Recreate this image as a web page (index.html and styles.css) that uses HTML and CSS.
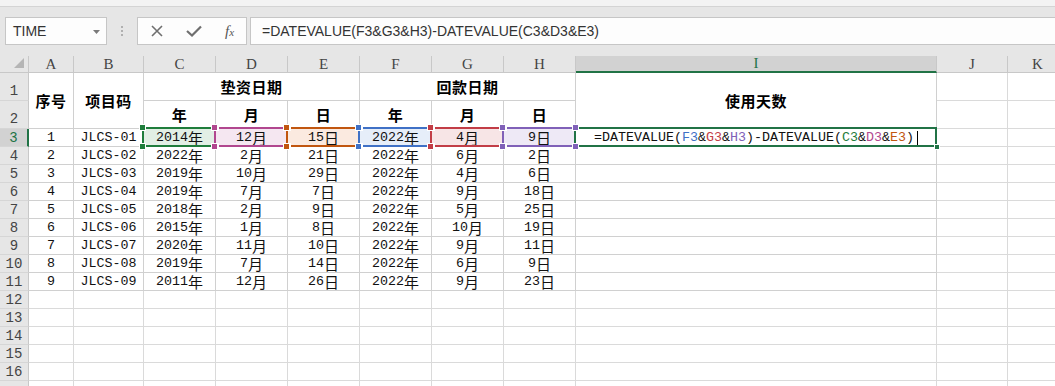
FILE: index.html
```html
<!DOCTYPE html>
<html lang="zh">
<head>
<meta charset="utf-8">
<title>DATEVALUE</title>
<link rel="stylesheet" href="styles.css">
</head>
<body>
<div class="ribbon"></div>
<div class="fbar">
  <div class="namebox"><span>TIME</span><svg class="dd" width="7" height="4" viewBox="0 0 7 4"><path d="M0 0H7L3.5 4Z" fill="#7a7a7a"/></svg></div>
  <div class="grip"><i></i><i></i><i></i></div>
  <div class="fxbox">
    <svg width="14" height="12" viewBox="0 0 14 12"><path d="M2 1L12 11M12 1L2 11" stroke="#6f6f6f" stroke-width="1.6" fill="none"/></svg>
    <svg width="16" height="12" viewBox="0 0 16 12"><path d="M1 6L6 10.5L15 1.5" stroke="#6f6f6f" stroke-width="2.2" fill="none"/></svg>
    <span class="fx">f<small>x</small></span>
  </div>
  <div class="finput">=DATEVALUE(F3&amp;G3&amp;H3)-DATEVALUE(C3&amp;D3&amp;E3)</div>
</div>

<div class="sheet">
  <div class="ch corner"><svg width="12" height="12" viewBox="0 0 12 12"><path d="M11 1V11H1Z" fill="#b5b5b5"/></svg></div>
  <div class="ch">A</div><div class="ch">B</div><div class="ch">C</div><div class="ch">D</div><div class="ch">E</div><div class="ch">F</div><div class="ch">G</div><div class="ch">H</div><div class="ch sel">I</div><div class="ch">J</div><div class="ch">K</div>

  <div class="rh tall">1</div>
  <div class="c hd span2r">序号</div>
  <div class="c hd span2r">项目码</div>
  <div class="c hd span3c">垫资日期</div>
  <div class="c hd span3c">回款日期</div>
  <div class="c hd span2r">使用天数</div>
  <div class="e"></div><div class="e"></div>

  <div class="rh tall">2</div>
  <div class="c hd">年</div><div class="c hd">月</div><div class="c hd">日</div>
  <div class="c hd">年</div><div class="c hd">月</div><div class="c hd">日</div>
  <div class="e"></div><div class="e"></div>

  <div class="rh sel">3</div>
  <div class="c">1</div><div class="c">JLCS-01</div>
  <div class="c rng r-c">2014<span class="k">年</span><span class="hs"><i></i><i></i><i></i><i></i></span></div>
  <div class="c rng r-d">12<span class="k">月</span><span class="hs"><i></i><i></i><i></i><i></i></span></div>
  <div class="c rng r-e">15<span class="k">日</span><span class="hs"><i></i><i></i><i></i><i></i></span></div>
  <div class="c rng r-f">2022<span class="k">年</span><span class="hs"><i></i><i></i><i></i><i></i></span></div>
  <div class="c rng r-g">4<span class="k">月</span><span class="hs"><i></i><i></i><i></i><i></i></span></div>
  <div class="c rng r-h">9<span class="k">日</span><span class="hs"><i></i><i></i><i></i><i></i></span></div>
  <div class="c active"><span>=DATEVALUE(<b class="t-f">F3</b>&amp;<b class="t-g">G3</b>&amp;<b class="t-h">H3</b>)-DATEVALUE(<b class="t-c">C3</b>&amp;<b class="t-d">D3</b>&amp;<b class="t-e">E3</b>)</span><span class="caret"></span><span class="fill"></span></div>
  <div class="e"></div><div class="e"></div>

  <div class="rh">4</div><div class="c">2</div><div class="c">JLCS-02</div><div class="c">2022<span class="k">年</span></div><div class="c">2<span class="k">月</span></div><div class="c">21<span class="k">日</span></div><div class="c">2022<span class="k">年</span></div><div class="c">6<span class="k">月</span></div><div class="c">2<span class="k">日</span></div><div class="c"></div><div class="e"></div><div class="e"></div>
  <div class="rh">5</div><div class="c">3</div><div class="c">JLCS-03</div><div class="c">2019<span class="k">年</span></div><div class="c">10<span class="k">月</span></div><div class="c">29<span class="k">日</span></div><div class="c">2022<span class="k">年</span></div><div class="c">4<span class="k">月</span></div><div class="c">6<span class="k">日</span></div><div class="c"></div><div class="e"></div><div class="e"></div>
  <div class="rh">6</div><div class="c">4</div><div class="c">JLCS-04</div><div class="c">2019<span class="k">年</span></div><div class="c">7<span class="k">月</span></div><div class="c">7<span class="k">日</span></div><div class="c">2022<span class="k">年</span></div><div class="c">9<span class="k">月</span></div><div class="c">18<span class="k">日</span></div><div class="c"></div><div class="e"></div><div class="e"></div>
  <div class="rh">7</div><div class="c">5</div><div class="c">JLCS-05</div><div class="c">2018<span class="k">年</span></div><div class="c">2<span class="k">月</span></div><div class="c">9<span class="k">日</span></div><div class="c">2022<span class="k">年</span></div><div class="c">5<span class="k">月</span></div><div class="c">25<span class="k">日</span></div><div class="c"></div><div class="e"></div><div class="e"></div>
  <div class="rh">8</div><div class="c">6</div><div class="c">JLCS-06</div><div class="c">2015<span class="k">年</span></div><div class="c">1<span class="k">月</span></div><div class="c">8<span class="k">日</span></div><div class="c">2022<span class="k">年</span></div><div class="c">10<span class="k">月</span></div><div class="c">19<span class="k">日</span></div><div class="c"></div><div class="e"></div><div class="e"></div>
  <div class="rh">9</div><div class="c">7</div><div class="c">JLCS-07</div><div class="c">2020<span class="k">年</span></div><div class="c">11<span class="k">月</span></div><div class="c">10<span class="k">日</span></div><div class="c">2022<span class="k">年</span></div><div class="c">9<span class="k">月</span></div><div class="c">11<span class="k">日</span></div><div class="c"></div><div class="e"></div><div class="e"></div>
  <div class="rh">10</div><div class="c">8</div><div class="c">JLCS-08</div><div class="c">2019<span class="k">年</span></div><div class="c">7<span class="k">月</span></div><div class="c">14<span class="k">日</span></div><div class="c">2022<span class="k">年</span></div><div class="c">6<span class="k">月</span></div><div class="c">9<span class="k">日</span></div><div class="c"></div><div class="e"></div><div class="e"></div>
  <div class="rh">11</div><div class="c">9</div><div class="c">JLCS-09</div><div class="c">2011<span class="k">年</span></div><div class="c">12<span class="k">月</span></div><div class="c">26<span class="k">日</span></div><div class="c">2022<span class="k">年</span></div><div class="c">9<span class="k">月</span></div><div class="c">23<span class="k">日</span></div><div class="c"></div><div class="e"></div><div class="e"></div>

  <div class="rh">12</div><div class="e"></div><div class="e"></div><div class="e"></div><div class="e"></div><div class="e"></div><div class="e"></div><div class="e"></div><div class="e"></div><div class="e"></div><div class="e"></div><div class="e"></div>
  <div class="rh">13</div><div class="e"></div><div class="e"></div><div class="e"></div><div class="e"></div><div class="e"></div><div class="e"></div><div class="e"></div><div class="e"></div><div class="e"></div><div class="e"></div><div class="e"></div>
  <div class="rh">14</div><div class="e"></div><div class="e"></div><div class="e"></div><div class="e"></div><div class="e"></div><div class="e"></div><div class="e"></div><div class="e"></div><div class="e"></div><div class="e"></div><div class="e"></div>
  <div class="rh">15</div><div class="e"></div><div class="e"></div><div class="e"></div><div class="e"></div><div class="e"></div><div class="e"></div><div class="e"></div><div class="e"></div><div class="e"></div><div class="e"></div><div class="e"></div>
  <div class="rh">16</div><div class="e"></div><div class="e"></div><div class="e"></div><div class="e"></div><div class="e"></div><div class="e"></div><div class="e"></div><div class="e"></div><div class="e"></div><div class="e"></div><div class="e"></div>
  <div class="rh"></div><div class="e"></div><div class="e"></div><div class="e"></div><div class="e"></div><div class="e"></div><div class="e"></div><div class="e"></div><div class="e"></div><div class="e"></div><div class="e"></div><div class="e"></div>
</div>
</body>
</html>
```

FILE: styles.css
```css
* { box-sizing: border-box; }
html, body { margin: 0; padding: 0; }
body {
  width: 1055px;
  height: 386px;
  overflow: hidden;
  background: #e6e6e6;
  font-family: "Liberation Sans", Arial, sans-serif;
}

.ribbon {
  height: 7px;
  background: #f3f3f3;
  border-bottom: 1px solid #d4d4d4;
}

.fbar {
  display: flex;
  align-items: stretch;
  height: 28px;
  margin: 10px 0 11px 0;
  padding-left: 5px;
}
.namebox {
  width: 102px;
  background: #fdfdfd;
  border: 1px solid #c6c6c6;
  display: flex;
  align-items: center;
  justify-content: space-between;
  padding: 0 6px 0 7px;
  font-size: 14px;
  color: #333;
}
.namebox .dd { margin-top: 1px; }
.grip {
  width: 30px;
  display: flex;
  flex-direction: column;
  align-items: center;
  justify-content: center;
  gap: 2px;
}
.grip i {
  display: block;
  width: 2px;
  height: 2px;
  background: #b0b0b0;
}
.fxbox {
  width: 110px;
  background: #fdfdfd;
  border: 1px solid #c6c6c6;
  display: flex;
  align-items: center;
  padding-left: 12px;
  gap: 20px;
}
.fxbox svg:nth-child(2) { margin-left: 2px; }
.fx {
  font-family: "Liberation Serif", serif;
  font-style: italic;
  font-size: 15px;
  color: #555;
  margin-left: 3px;
}
.fx small { font-size: 11px; }
.finput {
  flex: 1;
  margin-left: 3px;
  background: #fdfdfd;
  border-top: 1px solid #c6c6c6;
  border-bottom: 1px solid #c6c6c6;
  border-left: 1px solid #c6c6c6;
  padding-left: 11px;
  display: flex;
  align-items: center;
  font-size: 14px;
  color: #333;
  white-space: nowrap;
}

.sheet {
  display: grid;
  grid-template-columns: 29px 45px 70px 72px 72px 72px 72px 72px 72px 361px 71px 60px;
  grid-template-rows: 17px 28px 28px repeat(15, 18px);
  background: #fff;
  font-family: "Liberation Mono", "Noto Sans CJK SC", monospace;
  font-size: 13.33px;
  color: #111;
}

.ch {
  background: #e6e6e6;
  border-right: 1px solid #c8c8c8;
  border-bottom: 1px solid #c8c8c8;
  display: flex;
  align-items: center;
  justify-content: center;
  font-family: "Liberation Serif", "Noto Sans CJK SC", serif;
  font-size: 15px;
  color: #444;
  line-height: 1;
}
.ch.corner {
  justify-content: flex-end;
  align-items: flex-end;
  padding: 0 3px 3px 0;
}
.ch.sel {
  background: #d2d2d2;
  color: #217346;
  border-bottom: 2px solid #217346;
}

.rh {
  background: #e6e6e6;
  border-right: 1px solid #c8c8c8;
  border-bottom: 1px solid #d6d6d6;
  display: flex;
  align-items: center;
  justify-content: center;
  font-size: 14px;
  color: #444;
  line-height: 1;
}
.rh.tall {
  align-items: flex-end;
  padding-bottom: 2px;
}
.rh.sel {
  background: #d2d2d2;
  color: #217346;
  border-right: 2px solid #217346;
}

.c, .e {
  border-right: 1px solid #d0d0d0;
  border-bottom: 1px solid #d0d0d0;
  position: relative;
}
.c {
  display: flex;
  align-items: center;
  justify-content: center;
  white-space: nowrap;
  line-height: 16px;
  padding-top: 1px;
}
.e { border-color: #dadada; }

.k {
  display: inline-block;
  height: 16px;
  font-family: "Noto Sans CJK SC", sans-serif;
  font-size: 15px;
  line-height: 16px;
}

.hd {
  font-family: "Noto Sans CJK SC", sans-serif;
  font-weight: 700;
  font-size: 15px;
  letter-spacing: 0.5px;
  padding-top: 0;
  color: #000;
}
.span2r { grid-row: span 2; }
.span3c { grid-column: span 3; }

/* colored reference ranges */
.r-c { --rc: #1f7d3c; background: #e2efe5; }
.r-d { --rc: #b1478f; background: #f5e7f1; }
.r-e { --rc: #c1560f; background: #fbeae0; }
.r-f { --rc: #3f71c6; background: #e6eef9; }
.r-g { --rc: #c23d46; background: #f7e5e6; }
.r-h { --rc: #8061b8; background: #eee9f6; }
.rng::before {
  content: "";
  position: absolute;
  left: -2px;
  top: -2px;
  right: -1px;
  bottom: -1px;
  border: 2px solid var(--rc);
  pointer-events: none;
}
.hs i {
  position: absolute;
  width: 7px;
  height: 7px;
  background: var(--rc);
  border: 1px solid #fff;
  z-index: 2;
}
.hs i:nth-child(1) { left: -5px; top: -5px; }
.hs i:nth-child(2) { right: -4px; top: -5px; }
.hs i:nth-child(3) { left: -5px; bottom: -4px; }
.hs i:nth-child(4) { right: -4px; bottom: -4px; }

.active { z-index: 1; }
.active::before {
  content: "";
  position: absolute;
  left: -2px;
  top: -2px;
  right: -1px;
  bottom: -1px;
  border: 2px solid #217346;
}
.active b { font-weight: 400; }
.t-f { color: #3f71c6; }
.t-g { color: #c23d46; }
.t-h { color: #8061b8; }
.t-c { color: #1f7d3c; }
.t-d { color: #b1478f; }
.t-e { color: #c1560f; }
.caret {
  display: inline-block;
  width: 1px;
  height: 15px;
  background: #000;
  margin-left: 3px;
}
.fill {
  position: absolute;
  right: -4px;
  bottom: -4px;
  width: 6px;
  height: 6px;
  background: #217346;
  border: 1px solid #fff;
  z-index: 3;
}
```
